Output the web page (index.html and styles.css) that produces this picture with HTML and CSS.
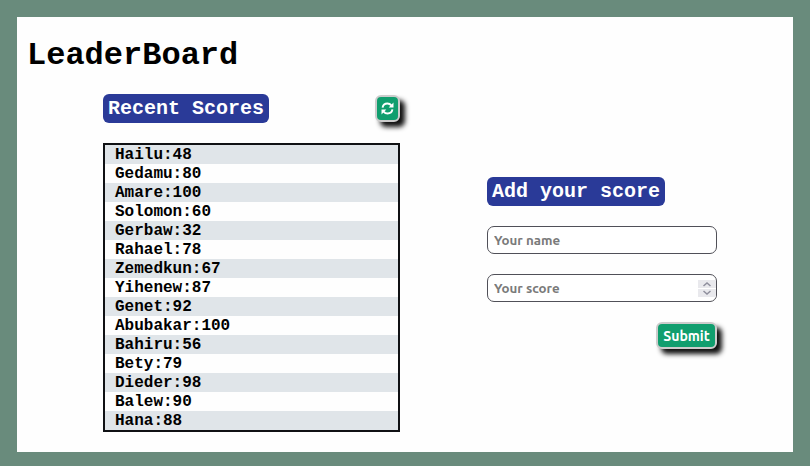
FILE: index.html
```html
<!DOCTYPE html>
<html lang="en">
<head>
<meta charset="utf-8">
<title>LeaderBoard</title>
<link rel="stylesheet" href="styles.css">
</head>
<body>
<main class="board">
  <h1>LeaderBoard</h1>
  <div class="content">
    <section class="recent">
      <div class="recent-head">
        <h2>Recent Scores</h2>
        <button class="btn refresh" type="button" aria-label="Refresh">
          <svg viewBox="0 0 512 512" width="13" height="13" fill="none" stroke="#fff" stroke-width="76"><path d="M62 222C80 120 160 62 252 62c66 0 118 28 154 74M450 290c-18 102-98 160-190 160-66 0-118-28-154-74"/><path fill="#fff" stroke="none" d="M492 24v190H302zM20 488V298h190z"/></svg>
        </button>
      </div>
      <ul class="scores">
        <li>Hailu:48</li>
        <li>Gedamu:80</li>
        <li>Amare:100</li>
        <li>Solomon:60</li>
        <li>Gerbaw:32</li>
        <li>Rahael:78</li>
        <li>Zemedkun:67</li>
        <li>Yihenew:87</li>
        <li>Genet:92</li>
        <li>Abubakar:100</li>
        <li>Bahiru:56</li>
        <li>Bety:79</li>
        <li>Dieder:98</li>
        <li>Balew:90</li>
        <li>Hana:88</li>
      </ul>
    </section>
    <form class="add">
      <h2>Add your score</h2>
      <div class="field"><input type="text" placeholder="Your name"></div>
      <div class="field">
        <input type="text" inputmode="numeric" placeholder="Your score">
        <span class="spinner">
          <svg viewBox="0 0 18 8" width="18" height="8"><path d="M5.5 6 9 3l3.500 3"/></svg>
          <svg viewBox="0 0 18 8" width="18" height="8"><path d="M5.500 2 9 5l3.500-3"/></svg>
        </span>
      </div>
      <button class="btn submit" type="button">Submit</button>
    </form>
  </div>
</main>
</body>
</html>
```
FILE: styles.css
```css
* {
  box-sizing: border-box;
  margin: 0;
  padding: 0;
}

body {
  height: 466px;
  padding: 17px 17px 14px;
  background: #698b7c;
  font-family: "Courier New", "Liberation Mono", monospace;
  font-weight: bold;
  color: #000;
}

.board {
  height: 435px;
  padding: 21px 10px 0;
  background: #fefefe;
}

h1 {
  font-size: 32px;
  line-height: 36px;
}

.content {
  display: flex;
  gap: 87px;
  padding: 20px 0 0 76px;
}

.recent {
  width: 297px;
}

.recent-head {
  display: flex;
  justify-content: space-between;
  align-items: center;
  height: 29px;
  margin-bottom: 20px;
}

h2 {
  height: 29px;
  padding-left: 5px;
  border-radius: 6px;
  background: #2a3a98;
  color: #fff;
  font-size: 20px;
  line-height: 30px;
  white-space: nowrap;
}

.recent h2 {
  width: 166px;
}

.scores {
  border: 2px solid #101114;
  list-style: none;
  font-size: 16px;
  line-height: 21px;
}

.scores li {
  height: 19px;
  padding-left: 10px;
}

.scores li:nth-child(odd) {
  background: #e0e5e9;
}

.btn {
  display: flex;
  align-items: center;
  justify-content: center;
  border: 2px solid #cccccc;
  border-radius: 6px;
  background: #109e6e;
  box-shadow: 5px 5px 5px #111;
  color: #fff;
}

.refresh {
  width: 25px;
  height: 27px;
  padding-right: 1px;
}

.add {
  display: flex;
  flex-direction: column;
  align-items: flex-start;
  gap: 20px;
  width: 230px;
  padding-top: 83px;
}

.add h2 {
  width: 178px;
}

.field {
  position: relative;
  width: 230px;
  height: 28px;
}

.field input {
  display: block;
  width: 100%;
  height: 100%;
  padding: 0 6px;
  border: 1px solid #505058;
  border-radius: 7px;
  background: #fff;
  font: bold 13.333px Ubuntu, "Noto Sans", sans-serif;
}

.field input::placeholder {
  color: #7a7a7a;
  opacity: 1;
}

.spinner {
  position: absolute;
  top: 6px;
  right: 1px;
  display: grid;
  gap: 1px;
}

.spinner svg {
  display: block;
  background: #e9e9ed;
  fill: none;
  stroke: #8f8f9d;
  stroke-width: 1.5;
}

.submit {
  align-self: flex-end;
  width: 61px;
  height: 27px;
  padding-top: 1px;
  font: bold 14px Ubuntu, "Noto Sans", sans-serif;
}
```
